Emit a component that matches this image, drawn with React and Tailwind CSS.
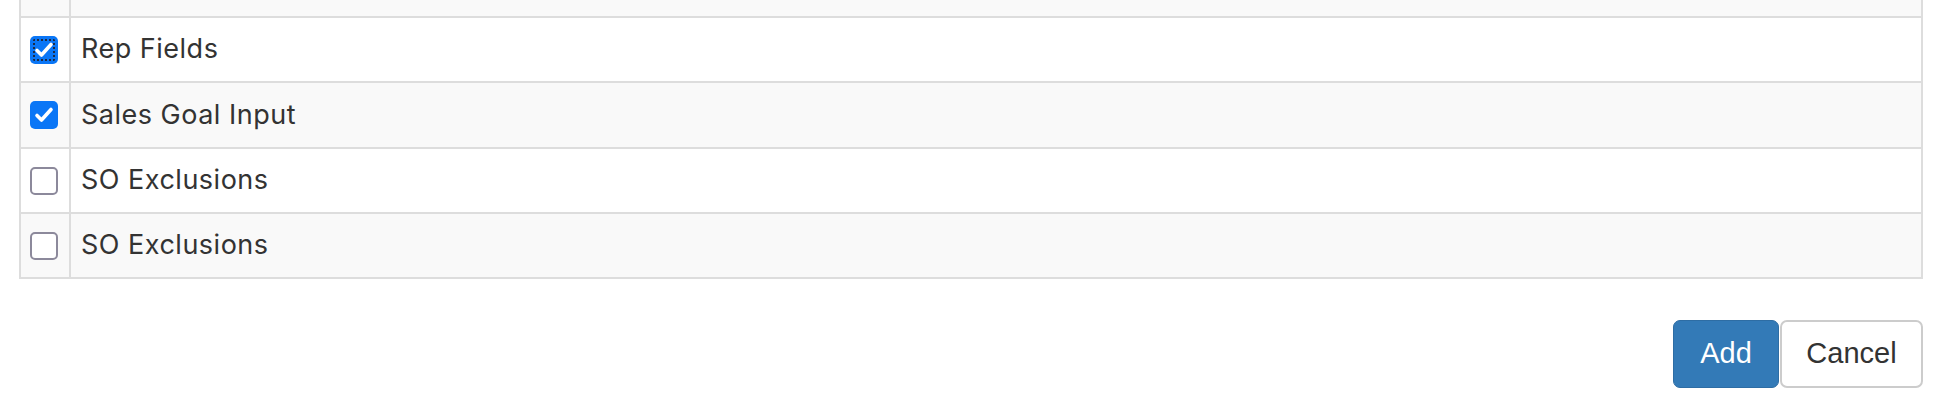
import { useState } from "react";

const initialRows = [
  { id: 1, label: "Rep Fields", checked: true, focused: true },
  { id: 2, label: "Sales Goal Input", checked: true },
  { id: 3, label: "SO Exclusions", checked: false },
  { id: 4, label: "SO Exclusions", checked: false },
];

const CheckBox = ({ checked, focused, onToggle }) => (
  <button
    type="button"
    onClick={onToggle}
    className={`relative flex h-[28px] w-[28px] items-center justify-center rounded-[5px] ${
      checked ? "bg-[#0a76f6]" : "border-2 border-[#8c899b] bg-white"
    } ${focused ? "outline-2 outline-dotted outline-[#1c2a44] -outline-offset-[5px]" : ""}`}
  >
    {checked && (
      <svg width="28" height="28" viewBox="0 0 28 28" fill="none">
        <path
          d="M7 14.5l4.5 4.5L21 8.5"
          stroke="white"
          strokeWidth="3.6"
          strokeLinecap="round"
          strokeLinejoin="round"
        />
      </svg>
    )}
  </button>
);

export default function App() {
  const [rows, setRows] = useState(initialRows);

  const toggle = (id) =>
    setRows((prev) =>
      prev.map((r) => (r.id === id ? { ...r, checked: !r.checked } : r))
    );

  return (
    <div className="h-[400px] w-full overflow-hidden bg-white font-['Inter',sans-serif] text-[#333]">
      <div className="pl-[19px] pr-[35px]">
        <div className="border-x-2 border-[#dddddd]">
          {/* row cut off above the fold */}
          <div className="flex h-[18px] border-b-2 border-[#dddddd] bg-[#f9f9f9]">
            <div className="w-[50px] border-r-2 border-[#dddddd]" />
            <div className="flex-1" />
          </div>
          {rows.map((row, i) => (
            <div
              key={row.id}
              className={`flex h-[65.25px] border-b-2 border-[#dddddd] ${
                i % 2 === 1 ? "bg-[#f9f9f9]" : "bg-white"
              }`}
            >
              <div className="flex w-[50px] items-center justify-center border-r-2 border-[#dddddd] pr-[2px] pt-[1px]">
                <CheckBox
                  checked={row.checked}
                  focused={row.focused}
                  onToggle={() => toggle(row.id)}
                />
              </div>
              <div className="flex flex-1 items-center pl-[10px] text-[27px] tracking-[0.5px]">
                {row.label}
              </div>
            </div>
          ))}
        </div>
      </div>

      <div className="mt-[41px] flex justify-end gap-[1px] pr-[35px] font-['Liberation_Sans',Arial,sans-serif] text-[29px]">
        <button
          type="button"
          className="h-[68px] w-[106px] rounded-[7px] border border-[#2e6da4] bg-[#337ab7] text-white"
        >
          Add
        </button>
        <button
          type="button"
          className="h-[68px] w-[143px] rounded-[7px] border-2 border-[#cccccc] bg-white text-[#333]"
        >
          Cancel
        </button>
      </div>
    </div>
  );
}
